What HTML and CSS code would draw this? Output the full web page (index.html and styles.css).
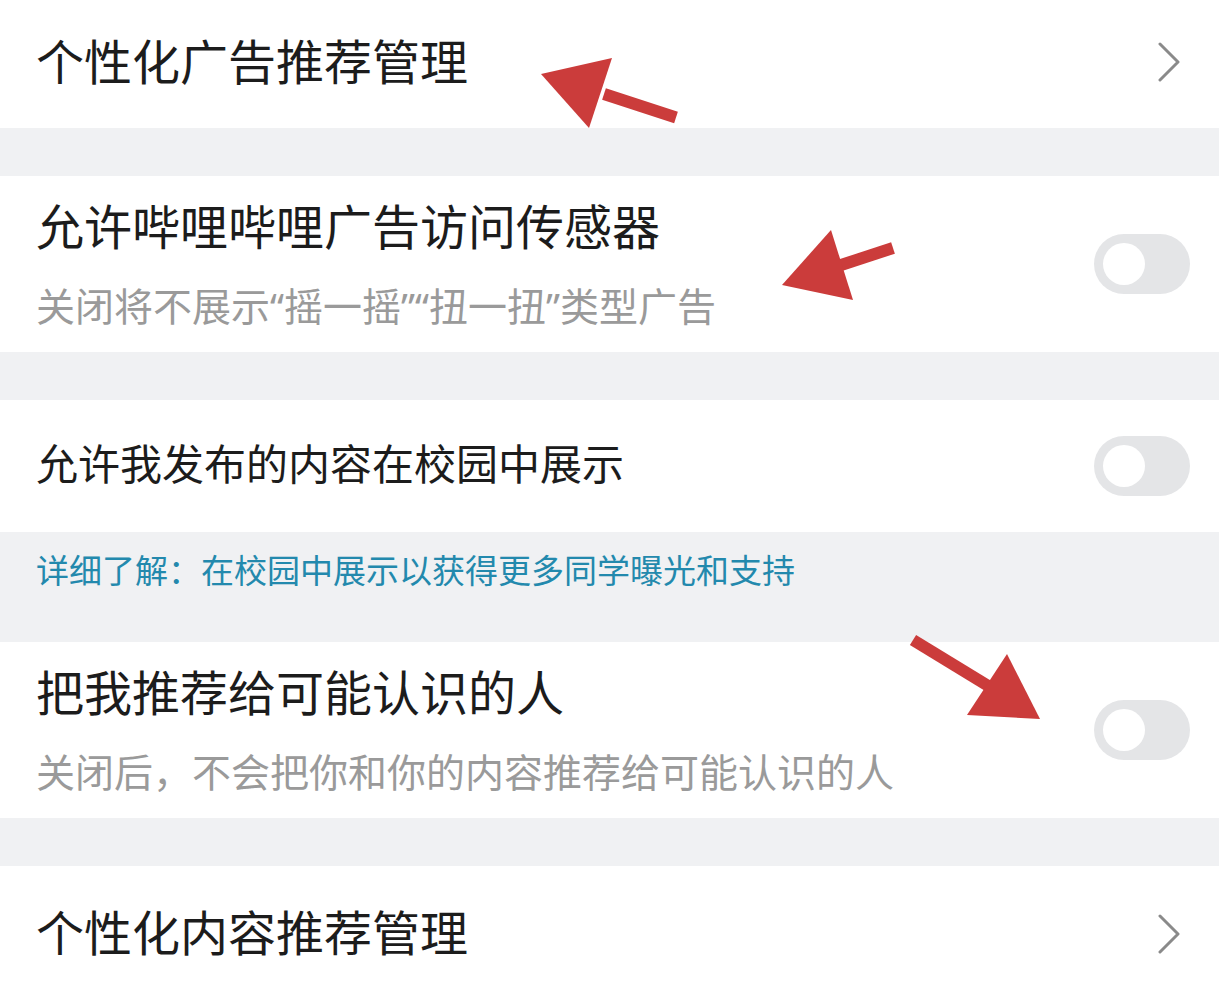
FILE: index.html
```html
<!DOCTYPE html>
<html lang="zh-CN">
<head>
    <meta charset="UTF-8">
    <meta name="viewport" content="width=device-width, initial-scale=1.0">
    <title>隐私设置</title>
    <link rel="stylesheet" href="styles.css">
</head>
<body>
    <div class="settings">
        <div class="row row-first">
            <span class="title">个性化广告推荐管理</span>
            <svg class="chevron" width="24" height="40" viewBox="0 0 24 40"><path d="M3 2 L21 20 L3 38"/></svg>
        </div>

        <div class="gap"></div>

        <div class="row row-tall">
            <div class="text">
                <div class="title">允许哔哩哔哩广告访问传感器</div>
                <div class="desc">关闭将不展示<span class="quote">“</span>摇一摇<span class="quote">”“</span>扭一扭<span class="quote">”</span>类型广告</div>
            </div>
            <span class="switch"><span class="knob"></span></span>
        </div>

        <div class="gap"></div>

        <div class="row row-campus">
            <span class="title title-small">允许我发布的内容在校园中展示</span>
            <span class="switch"><span class="knob"></span></span>
        </div>

        <div class="note">
            <span class="note-link">详细了解：在校园中展示以获得更多同学曝光和支持</span>
        </div>

        <div class="row row-tall">
            <div class="text">
                <div class="title">把我推荐给可能认识的人</div>
                <div class="desc">关闭后，不会把你和你的内容推荐给可能认识的人</div>
            </div>
            <span class="switch"><span class="knob"></span></span>
        </div>

        <div class="gap"></div>

        <div class="row row-last">
            <span class="title">个性化内容推荐管理</span>
            <svg class="chevron" width="24" height="40" viewBox="0 0 24 40"><path d="M3 2 L21 20 L3 38"/></svg>
        </div>
    </div>

    <!-- red annotation arrows drawn over the screenshot -->
    <svg class="marks" width="1219" height="997" viewBox="0 0 1219 997">
        <g class="arrow">
            <line x1="604" y1="94" x2="676" y2="117.5"/>
            <polygon points="541,74 612,58 589,128"/>
        </g>
        <g class="arrow">
            <line x1="838" y1="266" x2="893" y2="248"/>
            <polygon points="782,285 831,230 853,300"/>
        </g>
        <g class="arrow">
            <line x1="990" y1="687" x2="913" y2="640"/>
            <polygon points="1040,719 1007,654 967,715"/>
        </g>
    </svg>
</body>
</html>
```

FILE: styles.css
```css
body {
    margin: 0;
    width: 1219px;
    height: 997px;
    overflow: hidden;
    position: relative;
    background-color: #fff;
    font-family: "Noto Sans CJK SC", "Noto Sans", sans-serif;
    color: #1c1c1c;
}
.settings {
    display: flex;
    flex-direction: column;
}
.gap {
    height: 48px;
    background-color: #f0f1f3;
}
.row {
    display: flex;
    align-items: center;
    justify-content: space-between;
    padding: 0 29px 0 36px;
    background-color: #fff;
}
.row-first {
    height: 128px;
}
.row-first .title {
    padding-bottom: 11px;
}
.row-first .chevron {
    margin-bottom: 4px;
}
.row-campus {
    height: 132px;
}
.row-campus .title {
    padding-bottom: 8px;
}
.row-last {
    height: 131px;
}
.row-last .title {
    padding-bottom: 4px;
}
.row-last .chevron {
    margin-top: 4px;
}
.row-tall {
    height: 176px;
}
.text {
    display: flex;
    flex-direction: column;
    align-self: flex-start;
    padding-top: 20px;
}
.title {
    font-size: 48px;
    line-height: 56px;
}
.title-small {
    font-size: 42px;
}
.desc {
    margin-top: 27px;
    font-size: 39px;
    line-height: 50px;
    color: #9a9a9a;
}
.quote {
    font-family: "Noto Sans", sans-serif;
}
.chevron {
    margin-right: 9px;
}
.chevron path {
    fill: none;
    stroke: #8a8a8a;
    stroke-width: 3;
    stroke-linecap: round;
    stroke-linejoin: round;
}
.switch {
    display: flex;
    align-items: center;
    width: 96px;
    height: 60px;
    padding: 0 9px;
    box-sizing: border-box;
    border-radius: 30px;
    background-color: #e4e5e7;
}
.knob {
    width: 42px;
    height: 42px;
    border-radius: 50%;
    background-color: #fff;
}
.note {
    height: 110px;
    padding: 12px 36px 0;
    box-sizing: border-box;
    background-color: #f0f1f3;
}
.note-link {
    font-size: 33px;
    line-height: 50px;
    color: #2389ad;
}
.marks {
    position: absolute;
    top: 0;
    left: 0;
    pointer-events: none;
}
.arrow line {
    stroke: #cb3c3b;
    stroke-width: 12;
}
.arrow polygon {
    fill: #cb3c3b;
}
```
